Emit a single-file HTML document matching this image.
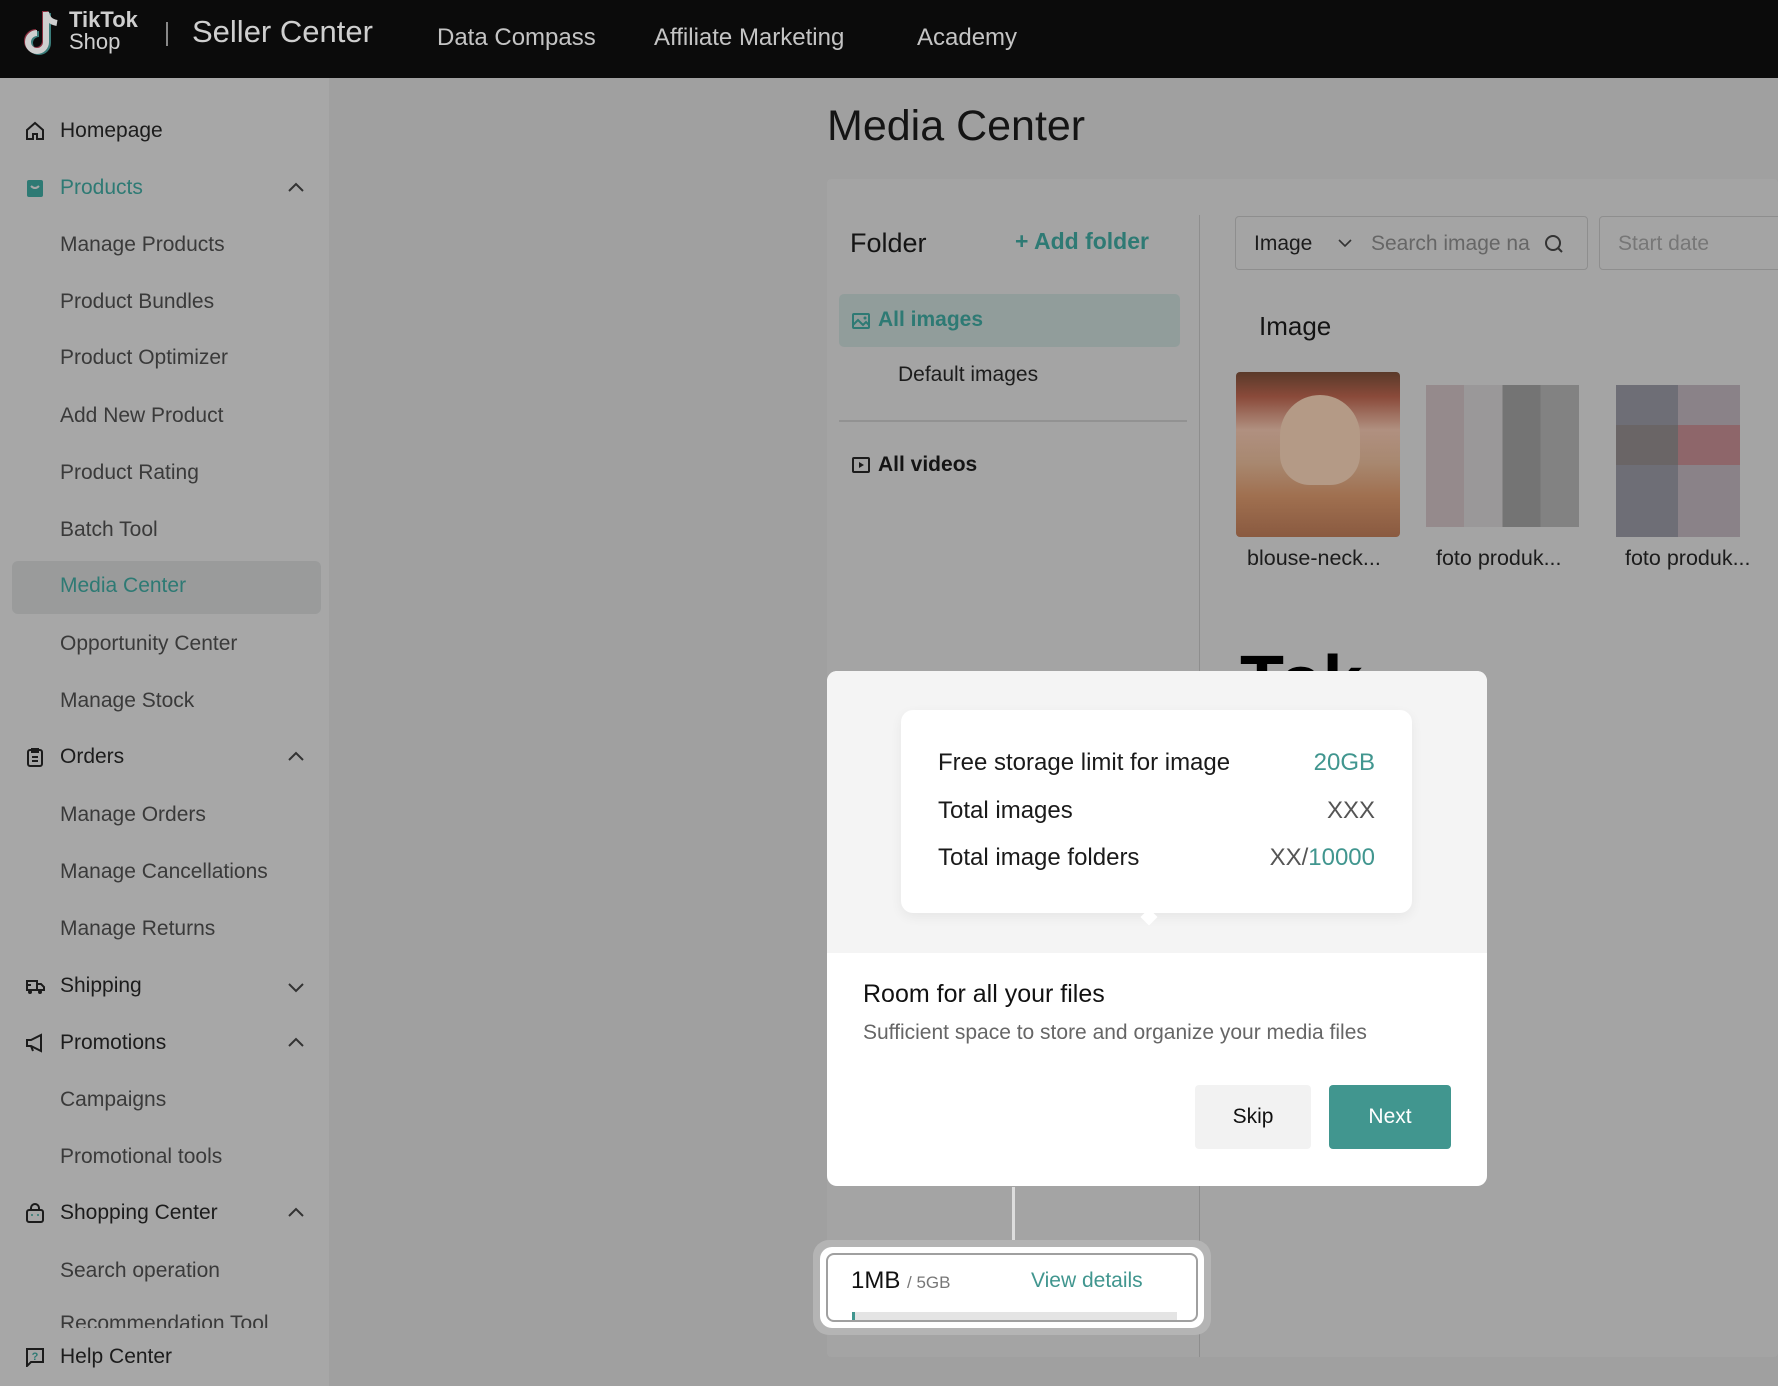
<!DOCTYPE html>
<html><head><meta charset="utf-8"><style>
*{box-sizing:border-box;margin:0;padding:0}
body{width:1778px;height:1386px;overflow:hidden;background:#a0a0a0;font-family:"Liberation Sans",sans-serif;position:relative;color:#1a1a1a}
.a{position:absolute;white-space:nowrap}
.hdr{left:0;top:0;width:1778px;height:78px;background:#0b0b0b}
.nav{color:#c4c4c4;font-size:24px;top:24px}
.sb{left:0;top:78px;width:329px;height:1308px;background:#a7a7a7}
.it{font-size:21px;line-height:30px;left:60px;color:#1c1c1c}
.sub{color:#3a3a3a}
.ic{left:25px;width:20px;height:20px}
.chev{left:288px;width:16px;height:10px}
</style></head><body>
<div class="a hdr"></div>
<svg class="a" style="left:22px;top:8px" width="46" height="50" viewBox="0 0 46 50"><path d="M24 4v30a9 9 0 1 1-9-9" fill="none" stroke="#3a7c7a" stroke-width="6" transform="translate(2,1)"/><path d="M24 4v30a9 9 0 1 1-9-9" fill="none" stroke="#8a3040" stroke-width="6" transform="translate(-1,-1)"/><path d="M24 4v30a9 9 0 1 1-9-9M24 4c1 7 5 10 11 11" fill="none" stroke="#cfcfcf" stroke-width="6"/></svg>
<div class="a" style="left:69px;top:9px;color:#cfcfcf;font-size:22px;font-weight:bold;line-height:22px">TikTok</div>
<div class="a" style="left:69px;top:31px;color:#cfcfcf;font-size:22px;line-height:22px">Shop</div>
<div class="a" style="left:166px;top:22px;width:2px;height:24px;background:#888"></div>
<div class="a" style="left:192px;top:14px;color:#cfcfcf;font-size:31px">Seller Center</div>
<div class="a nav" style="left:437px">Data Compass</div>
<div class="a nav" style="left:654px">Affiliate Marketing</div>
<div class="a nav" style="left:917px">Academy</div>

<div class="a sb"></div>
<div class="a" style="left:12px;top:561px;width:309px;height:53px;background:#9a9b9b;border-radius:6px"></div>

<svg class="a ic" style="top:121px" viewBox="0 0 20 20"><path d="M2 9L10 2l8 7v9h-6v-5H8v5H2z" fill="none" stroke="#1c1c1c" stroke-width="2"/></svg>
<div class="a it" style="top:116px">Homepage</div>
<svg class="a ic" style="top:178px" viewBox="0 0 20 20"><rect x="2" y="2" width="16" height="17" rx="2" fill="#2e7a74"/><path d="M6 8q4 4 8 0" stroke="#a7a7a7" stroke-width="2" fill="none"/></svg>
<div class="a it" style="top:173px;color:#2e7a74">Products</div>
<svg class="a chev" style="top:182px" viewBox="0 0 16 10"><path d="M1 9l7-7 7 7" stroke="#333" stroke-width="2" fill="none"/></svg>
<div class="a it sub" style="top:230px">Manage Products</div>
<div class="a it sub" style="top:287px">Product Bundles</div>
<div class="a it sub" style="top:343px">Product Optimizer</div>
<div class="a it sub" style="top:401px">Add New Product</div>
<div class="a it sub" style="top:458px">Product Rating</div>
<div class="a it sub" style="top:515px">Batch Tool</div>
<div class="a it" style="top:571px;color:#2e7a74">Media Center</div>
<div class="a it sub" style="top:629px">Opportunity Center</div>
<div class="a it sub" style="top:686px">Manage Stock</div>
<svg class="a ic" style="top:747px" viewBox="0 0 20 20"><rect x="3" y="3" width="14" height="16" rx="2" fill="none" stroke="#1c1c1c" stroke-width="2"/><path d="M7 2h6v3H7zM7 10h6M7 14h6" stroke="#1c1c1c" stroke-width="2" fill="none"/></svg>
<div class="a it" style="top:742px">Orders</div>
<svg class="a chev" style="top:751px" viewBox="0 0 16 10"><path d="M1 9l7-7 7 7" stroke="#333" stroke-width="2" fill="none"/></svg>
<div class="a it sub" style="top:800px">Manage Orders</div>
<div class="a it sub" style="top:857px">Manage Cancellations</div>
<div class="a it sub" style="top:914px">Manage Returns</div>
<svg class="a ic" style="top:976px" viewBox="0 0 20 20"><path d="M2 5h10v9H2zM12 8h4l3 3v3h-7M1 9h5" fill="none" stroke="#1c1c1c" stroke-width="2"/><circle cx="5" cy="16" r="2" fill="#1c1c1c"/><circle cx="15" cy="16" r="2" fill="#1c1c1c"/></svg>
<div class="a it" style="top:971px">Shipping</div>
<svg class="a chev" style="top:983px" viewBox="0 0 16 10"><path d="M1 1l7 7 7-7" stroke="#333" stroke-width="2" fill="none"/></svg>
<svg class="a ic" style="top:1033px" viewBox="0 0 20 20"><path d="M2 7h4l10-5v16L6 13H2zM6 13l2 5" fill="none" stroke="#1c1c1c" stroke-width="2"/></svg>
<div class="a it" style="top:1028px">Promotions</div>
<svg class="a chev" style="top:1037px" viewBox="0 0 16 10"><path d="M1 9l7-7 7 7" stroke="#333" stroke-width="2" fill="none"/></svg>
<div class="a it sub" style="top:1085px">Campaigns</div>
<div class="a it sub" style="top:1142px">Promotional tools</div>
<svg class="a ic" style="top:1203px" viewBox="0 0 20 20"><rect x="2" y="7" width="16" height="12" rx="2" fill="none" stroke="#1c1c1c" stroke-width="2"/><path d="M6 7V5a4 4 0 0 1 8 0v2" fill="none" stroke="#1c1c1c" stroke-width="2"/><circle cx="7" cy="12" r="1" fill="#2e7a74"/><circle cx="13" cy="12" r="1" fill="#2e7a74"/></svg>
<div class="a it" style="top:1198px">Shopping Center</div>
<svg class="a chev" style="top:1207px" viewBox="0 0 16 10"><path d="M1 9l7-7 7 7" stroke="#333" stroke-width="2" fill="none"/></svg>
<div class="a it sub" style="top:1256px">Search operation</div>
<div class="a" style="left:0;top:1312px;width:329px;height:16px;overflow:hidden"><div class="a it sub" style="top:-3px">Recommendation Tool</div></div>
<svg class="a ic" style="top:1347px" viewBox="0 0 20 20"><path d="M2 2h16v13H6l-4 4z" fill="none" stroke="#1c1c1c" stroke-width="2"/><text x="10" y="13" font-size="11" font-weight="bold" fill="#2e7a74" text-anchor="middle" font-family="Liberation Sans">?</text></svg>
<div class="a it" style="top:1342px">Help Center</div>

<div class="a" style="left:827px;top:102px;font-size:43px;color:#141414">Media Center</div>
<div class="a" style="left:827px;top:179px;width:951px;height:1178px;background:#a4a4a4;border-radius:4px"></div>
<div class="a" style="left:1199px;top:215px;width:1px;height:1142px;background:#8e8e8e"></div>
<div class="a" style="left:850px;top:228px;font-size:27px;color:#141414">Folder</div>
<div class="a" style="left:1015px;top:228px;font-size:23px;color:#2e7a74;font-weight:bold">+ Add folder</div>
<div class="a" style="left:839px;top:294px;width:341px;height:53px;background:#919d9b;border-radius:5px"></div>
<svg class="a" style="left:852px;top:313px" width="18" height="16" viewBox="0 0 18 16"><rect x="1" y="1" width="16" height="14" rx="1" fill="none" stroke="#2e7a74" stroke-width="2"/><path d="M1 12l5-5 5 5 3-3 3 3" fill="none" stroke="#2e7a74" stroke-width="2"/><circle cx="13" cy="5" r="1.5" fill="#2e7a74"/></svg>
<div class="a" style="left:878px;top:308px;font-size:21px;color:#2e7a74;font-weight:bold">All images</div>
<div class="a" style="left:898px;top:363px;font-size:21px;color:#1c1c1c">Default images</div>
<div class="a" style="left:839px;top:420px;width:348px;height:2px;background:#929292"></div>
<svg class="a" style="left:852px;top:457px" width="18" height="16" viewBox="0 0 18 16"><rect x="1" y="1" width="16" height="14" rx="1" fill="none" stroke="#1c1c1c" stroke-width="2"/><path d="M7 5v6l5-3z" fill="#1c1c1c"/></svg>
<div class="a" style="left:878px;top:453px;font-size:21px;color:#141414;font-weight:bold">All videos</div>

<div class="a" style="left:1235px;top:216px;width:353px;height:54px;border:1px solid #8e8e8e;border-radius:4px"></div>
<div class="a" style="left:1254px;top:232px;font-size:21px;color:#1c1c1c">Image</div>
<svg class="a" style="left:1338px;top:239px" width="14" height="9" viewBox="0 0 14 9"><path d="M1 1l6 6 6-6" stroke="#333" stroke-width="1.6" fill="none"/></svg>
<div class="a" style="left:1371px;top:232px;font-size:21px;color:#666">Search image na</div>
<svg class="a" style="left:1543px;top:233px" width="22" height="22" viewBox="0 0 22 22"><circle cx="10" cy="10" r="7" stroke="#333" stroke-width="2" fill="none"/><path d="M15 15l4 4" stroke="#333" stroke-width="2"/></svg>
<div class="a" style="left:1599px;top:216px;width:200px;height:54px;border:1px solid #8e8e8e;border-radius:4px"></div>
<div class="a" style="left:1618px;top:232px;font-size:21px;color:#777">Start date</div>
<div class="a" style="left:1259px;top:311px;font-size:26px;color:#141414">Image</div>
<div class="a" style="left:1236px;top:372px;width:164px;height:165px;border-radius:4px;background:linear-gradient(180deg,#5a3a2a 0%,#8a4a3a 15%,#b09080 35%,#a88870 55%,#a07050 75%,#8a5a40 100%)"></div>
<div class="a" style="left:1280px;top:395px;width:80px;height:90px;border-radius:40px 40px 30px 30px;background:#b49a86"></div>
<div class="a" style="left:1426px;top:385px;width:153px;height:142px;background:linear-gradient(90deg,#958a8c 0 25%,#9a9899 25% 50%,#747474 50% 75%,#828282 75%)"></div>
<div class="a" style="left:1616px;top:385px;width:124px;height:152px;background:linear-gradient(90deg,#6e6e76 0 50%,#8a8288 50%)"></div>
<div class="a" style="left:1616px;top:425px;width:124px;height:40px;background:linear-gradient(90deg,#6a6566 0 50%,#8e666a 50%)"></div>
<div class="a" style="left:1247px;top:546px;font-size:21.5px;color:#1c1c1c">blouse-neck...</div>
<div class="a" style="left:1436px;top:546px;font-size:21.5px;color:#1c1c1c">foto produk...</div>
<div class="a" style="left:1625px;top:546px;font-size:21.5px;color:#1c1c1c">foto produk...</div>
<div class="a" style="left:1240px;top:644px;width:170px;height:28px;overflow:hidden"><div class="a" style="left:0;top:2px;font-size:72px;font-weight:bold;color:#000;line-height:72px">Tok</div></div>

<div class="a" style="left:827px;top:671px;width:660px;height:515px;background:#fff;border-radius:10px;overflow:hidden">
<div class="a" style="left:0;top:0;width:660px;height:282px;background:#f4f4f4"></div>
<div class="a" style="left:74px;top:39px;width:511px;height:203px;background:#fff;border-radius:12px;box-shadow:0 4px 12px rgba(0,0,0,.06)"></div>
<div class="a" style="left:316px;top:240px;width:12px;height:12px;background:#fff;transform:rotate(45deg)"></div>
<div class="a" style="left:111px;top:78px;font-size:24px;color:#1a1a1a">Free storage limit for image</div>
<div class="a" style="right:112px;top:78px;font-size:24px;color:#41968f">20GB</div>
<div class="a" style="left:111px;top:126px;font-size:24px;color:#1a1a1a">Total images</div>
<div class="a" style="right:112px;top:126px;font-size:24px;color:#555">XXX</div>
<div class="a" style="left:111px;top:173px;font-size:24px;color:#1a1a1a">Total image folders</div>
<div class="a" style="right:112px;top:173px;font-size:24px;color:#555">XX/<span style="color:#41968f">10000</span></div>
<div class="a" style="left:36px;top:309px;font-size:25px;color:#111">Room for all your files</div>
<div class="a" style="left:36px;top:350px;font-size:21px;color:#666">Sufficient space to store and organize your media files</div>
<div class="a" style="left:368px;top:414px;width:116px;height:64px;background:#f2f2f2;border-radius:4px;font-size:21px;line-height:64px;text-align:center;color:#111">Skip</div>
<div class="a" style="left:502px;top:414px;width:122px;height:64px;background:#41968f;border-radius:4px;font-size:21px;line-height:64px;text-align:center;color:#fff">Next</div>
</div>

<div class="a" style="left:1012px;top:1187px;width:3px;height:62px;background:#ddd"></div>
<div class="a" style="left:813px;top:1240px;width:398px;height:95px;border-radius:16px;background:#b4b4b4"></div>
<div class="a" style="left:820px;top:1247px;width:384px;height:81px;border-radius:12px;background:#fff"></div>
<div class="a" style="left:826px;top:1253px;width:372px;height:69px;border-radius:8px;background:#fff;border:2px solid #a0a0a0;overflow:hidden">
<div class="a" style="left:23px;top:12px;font-size:24px;color:#111">1MB <span style="font-size:17px;color:#777">/ 5GB</span></div>
<div class="a" style="left:203px;top:14px;font-size:21px;color:#41968f">View details</div>
<div class="a" style="left:24px;top:57px;width:325px;height:10px;background:#e4e4e4"></div>
<div class="a" style="left:24px;top:57px;width:3px;height:10px;background:#41968f"></div>
</div>
</body></html>
